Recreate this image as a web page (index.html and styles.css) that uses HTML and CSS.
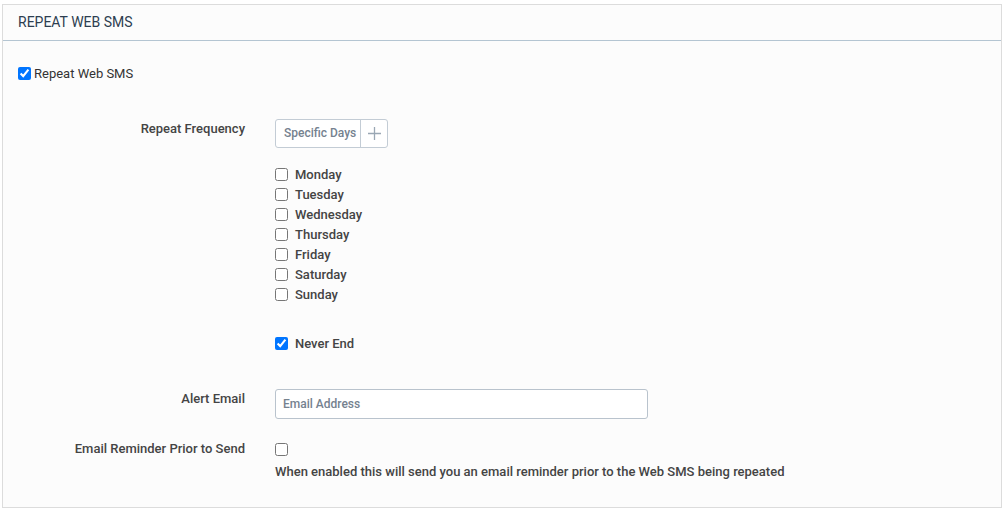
FILE: index.html
```html
<!DOCTYPE html>
<html lang="en">
<head>
    <meta charset="UTF-8">
    <title>Repeat Web SMS</title>
    <link rel="stylesheet" href="styles.css">
</head>
<body>
    <div class="panel">
        <div class="panel-heading">REPEAT WEB SMS</div>
        <div class="panel-body">
            <label class="check main-check">
                <input type="checkbox" checked>
                <span>Repeat Web SMS</span>
            </label>

            <div class="form-row row-frequency">
                <div class="form-label">Repeat Frequency</div>
                <div class="form-control">
                    <div class="btn-group">
                        <span class="btn-text">Specific Days</span>
                        <span class="btn-add">
                            <svg width="13" height="13" viewBox="0 0 13 13"><path d="M6.5 0v13M0 6.5h13" stroke="#9aa7b4" stroke-width="1.3" fill="none"/></svg>
                        </span>
                    </div>
                    <div class="days">
                        <label class="check day"><input type="checkbox"><span>Monday</span></label>
                        <label class="check day"><input type="checkbox"><span>Tuesday</span></label>
                        <label class="check day"><input type="checkbox"><span>Wednesday</span></label>
                        <label class="check day"><input type="checkbox"><span>Thursday</span></label>
                        <label class="check day"><input type="checkbox"><span>Friday</span></label>
                        <label class="check day"><input type="checkbox"><span>Saturday</span></label>
                        <label class="check day"><input type="checkbox"><span>Sunday</span></label>
                    </div>
                    <label class="check day never-end"><input type="checkbox" checked><span>Never End</span></label>
                </div>
            </div>

            <div class="form-row row-email">
                <div class="form-label">Alert Email</div>
                <div class="form-control">
                    <input type="text" class="text-input" placeholder="Email Address">
                </div>
            </div>

            <div class="form-row row-reminder">
                <div class="form-label">Email Reminder Prior to Send</div>
                <div class="form-control">
                    <input type="checkbox" class="plain-check">
                    <div class="help">When enabled this will send you an email reminder prior to the Web SMS being repeated</div>
                </div>
            </div>
        </div>
    </div>
</body>
</html>
```

FILE: styles.css
```css
body, html {
    margin: 0;
    padding: 0;
    background: #ffffff;
    font-family: Roboto, "Liberation Sans", sans-serif;
    color: #333333;
}

body {
    padding: 4px 3px 0 2px;
}

.panel {
    border: 1px solid #dcdcdc;
    background: #fcfcfc;
    height: 502px;
}

.panel-heading {
    height: 35px;
    line-height: 35px;
    padding-left: 15px;
    font-size: 14px;
    color: #2d3e50;
    border-bottom: 1px solid #b4c5d2;
}

.panel-body {
    padding-top: 24px;
}

.check {
    display: flex;
    align-items: center;
    font-size: 13px;
}

.check input {
    margin: 0;
    width: 13px;
    height: 13px;
}

.main-check {
    margin-left: 15px;
    height: 17px;
    color: #333333;
}

.main-check span {
    margin-left: 3px;
}

.form-row {
    display: flex;
}

/* medium weight, a shade lighter so it doesn't read as bold */
.form-label {
    width: 242px;
    text-align: right;
    font-size: 13px;
    font-weight: 500;
    color: #444444;
    line-height: 17px;
}

.form-control {
    margin-left: 30px;
}

.row-frequency {
    margin-top: 37px;
}

.row-frequency .form-label {
    padding-top: 1px;
}

.btn-group {
    display: inline-flex;
    height: 27px;
    border: 1px solid #c3ccd5;
    border-radius: 3px;
    background: #ffffff;
    font-size: 12px;
    font-weight: 500;
    color: #75828f;
}

.btn-text {
    padding: 0 4px 0 8px;
    line-height: 27px;
    border-right: 1px solid #c3ccd5;
}

.btn-add {
    width: 26px;
    display: flex;
    align-items: center;
    justify-content: center;
}

.days {
    margin-top: 16px;
}

.day {
    height: 20px;
    font-weight: 500;
    color: #444444;
}

.day span {
    margin-left: 7px;
}

.never-end {
    margin-top: 29px;
}

.row-email {
    margin-top: 36px;
}

.row-email .form-label {
    padding-top: 1px;
}

.text-input {
    box-sizing: border-box;
    width: 373px;
    height: 30px;
    border: 1px solid #b9c3cd;
    border-radius: 3px;
    padding: 0 7px;
    font-family: Roboto, "Liberation Sans", sans-serif;
    font-size: 12px;
    font-weight: 500;
    color: #333333;
    background: #ffffff;
}

.text-input::placeholder {
    color: #75828f;
}

.row-reminder {
    margin-top: 20px;
}

.row-reminder .form-label {
    padding-top: 1px;
}

.plain-check {
    margin: 4px 0 0 0;
    width: 13px;
    height: 13px;
    display: block;
}

.help {
    margin-top: 8px;
    font-size: 13px;
    font-weight: 500;
    color: #444444;
}
```
